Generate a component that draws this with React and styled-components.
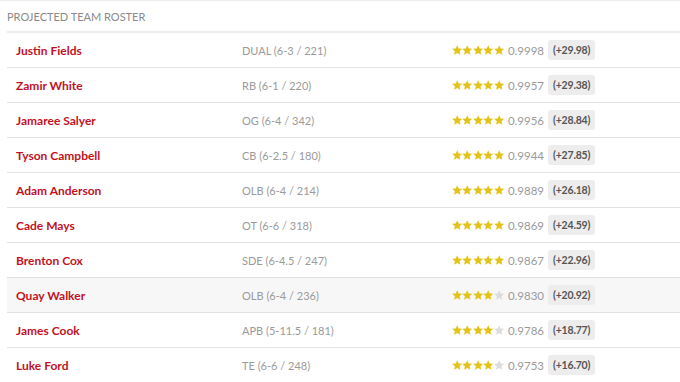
import React from "react";
import styled, { createGlobalStyle } from "styled-components";

const players = [
  { name: "Justin Fields", pos: "DUAL (6-3 / 221)", stars: 5, rating: "0.9998", pts: "+29.98" },
  { name: "Zamir White", pos: "RB (6-1 / 220)", stars: 5, rating: "0.9957", pts: "+29.38" },
  { name: "Jamaree Salyer", pos: "OG (6-4 / 342)", stars: 5, rating: "0.9956", pts: "+28.84" },
  { name: "Tyson Campbell", pos: "CB (6-2.5 / 180)", stars: 5, rating: "0.9944", pts: "+27.85" },
  { name: "Adam Anderson", pos: "OLB (6-4 / 214)", stars: 5, rating: "0.9889", pts: "+26.18" },
  { name: "Cade Mays", pos: "OT (6-6 / 318)", stars: 5, rating: "0.9869", pts: "+24.59" },
  { name: "Brenton Cox", pos: "SDE (6-4.5 / 247)", stars: 5, rating: "0.9867", pts: "+22.96" },
  { name: "Quay Walker", pos: "OLB (6-4 / 236)", stars: 4, rating: "0.9830", pts: "+20.92", hover: true },
  { name: "James Cook", pos: "APB (5-11.5 / 181)", stars: 4, rating: "0.9786", pts: "+18.77" },
  { name: "Luke Ford", pos: "TE (6-6 / 248)", stars: 4, rating: "0.9753", pts: "+16.70" },
];

const GlobalStyle = createGlobalStyle`
  html, body {
    margin: 0;
    padding: 0;
    background: #fff;
    font-family: Lato, "Liberation Sans", sans-serif;
    overflow: hidden;
  }
`;

const Panel = styled.section`
  border-top: 1px solid #eeeeee;
  padding-left: 7px;
`;

const Title = styled.h3`
  margin: 0;
  height: 30px;
  display: flex;
  align-items: center;
  font-size: 11px;
  font-weight: 400;
  color: #8a8a8a;
`;

const List = styled.ul`
  margin: 0;
  padding: 0;
  list-style: none;
  border-top: 2px solid #ececec;
`;

const Row = styled.li`
  display: grid;
  grid-template-columns: 235px 210px 1fr;
  align-items: center;
  height: 34px;
  border-bottom: 1px solid #e2e2e2;
  background: ${(p) => (p.$hover ? "#f7f7f7" : "#fff")};
`;

const Name = styled.span`
  padding-left: 9px;
  font-size: 12px;
  font-weight: 700;
  color: #c1121f;
`;

const Pos = styled.span`
  font-size: 11px;
  color: #9a9a9a;
`;

const Rating = styled.div`
  display: flex;
  align-items: center;
`;

const Stars = styled.span`
  display: flex;
`;

const Score = styled.span`
  margin-left: 4px;
  font-size: 11.5px;
  color: #9a9a9a;
`;

const Badge = styled.span`
  margin-left: 4px;
  padding: 4px 5px;
  border-radius: 3px;
  background: #ededed;
  font-size: 10.5px;
  font-weight: 700;
  letter-spacing: -0.2px;
  color: #555;
`;

function Star({ on }) {
  return (
    <svg width="10.4" height="10.4" viewBox="0 0 24 24">
      <path
        d="M12 0.5l3.4 7.6 8.3.8-6.3 5.5 1.9 8.1L12 18.2 4.7 22.5l1.9-8.1L0.3 8.9l8.3-.8z"
        fill={on ? "#e3c31a" : "#dcdcdc"}
      />
    </svg>
  );
}

export default function App() {
  return (
    <>
      <GlobalStyle />
      <Panel>
        <Title>PROJECTED TEAM ROSTER</Title>
        <List>
          {players.map((p) => (
            <Row key={p.name} $hover={p.hover}>
              <Name>{p.name}</Name>
              <Pos>{p.pos}</Pos>
              <Rating>
                <Stars>
                  {[0, 1, 2, 3, 4].map((i) => (
                    <Star key={i} on={i < p.stars} />
                  ))}
                </Stars>
                <Score>{p.rating}</Score>
                <Badge>({p.pts})</Badge>
              </Rating>
            </Row>
          ))}
        </List>
      </Panel>
    </>
  );
}
